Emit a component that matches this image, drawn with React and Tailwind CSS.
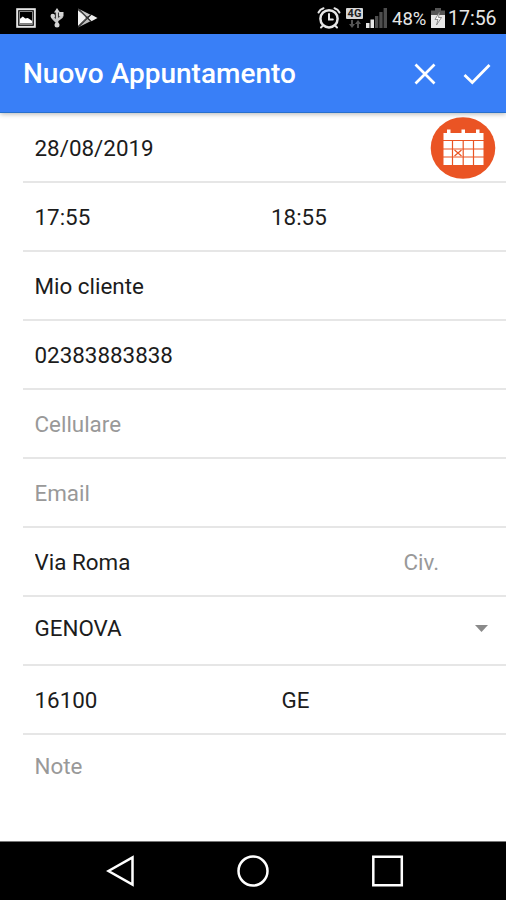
import { useState } from "react";

const StatusBar = () => {
  return (
    <div className="flex h-[34px] items-center justify-between bg-black pt-px pl-4 pr-[9px] text-[#e6e6e6]">
      <div className="flex items-center">
        <svg width="20" height="20" viewBox="0 0 20 20" fill="none">
          <rect x="1.2" y="1.2" width="17.6" height="17.6" stroke="#e6e6e6" strokeWidth="2" />
          <path d="M3.800 15.500v-4.500l3-2.500 2.500 2 2.500-.5 4.500 3v2.500z" fill="#fff" />
          <path d="M3.500 3.500h13v13h-13z" stroke="#888" strokeWidth="1" />
        </svg>
        <svg className="ml-[14px]" width="14" height="20" viewBox="0 0 14 20" fill="none" stroke="#c8c8c8" strokeWidth="2.600">
          <path d="M7 3v15M2.800 8v2l4 4M11.500 6v3L7 12.500" />
          <path d="M7 0l3 4.500H4z" fill="#d4d4d4" stroke="none" />
          <circle cx="7" cy="17" r="2.500" fill="#d4d4d4" stroke="none" />
          <circle cx="2.800" cy="8" r="2.300" fill="#d4d4d4" stroke="none" />
          <path d="M9 4h4.500v4.500H9z" fill="#d4d4d4" stroke="none" />
        </svg>
        <svg className="ml-[14px]" width="20" height="20" viewBox="0 0 20 20">
          <path d="M0 0.500L13 7l-7 3.300z" fill="#c8c8c8" />
          <path d="M0 2l8 8-8 8z" fill="#f2f2f2" />
          <path d="M0 19.500L13 13l-5-3z" fill="#bdbdbd" />
          <path d="M13.500 6.800l6 3.200-6 3.200-3.500-3.200z" fill="#eee" />
          <path d="M1 1.500l12 12M1 18.500l12-12" stroke="#333" strokeWidth="1.100" />
        </svg>
      </div>
      <div className="flex items-center">
        <svg width="24" height="22" viewBox="0 0 24 22" fill="none" stroke="#e6e6e6" strokeLinecap="round">
          <circle cx="12" cy="11.800" r="8.600" strokeWidth="2.500" />
          <path d="M12 7v5.500h3.800" strokeWidth="2" />
          <path d="M1.500 5.500Q3 2.300 6.500 1.300M22.500 5.500Q21 2.300 17.500 1.300M6 18.500l-2 2M18 18.500l2 2" strokeWidth="2" />
        </svg>
        <div className="ml-[5px] flex h-5 w-[17px] flex-col items-center">
          <span className="flex h-[11px] w-[17px] items-center justify-center rounded-[1px] bg-[#d8d8d8] text-[11px] leading-none font-bold text-[#222]">4G</span>
          <svg className="mt-px" width="14" height="8" viewBox="0 0 14 8" fill="#555">
            <path d="M3 0h2v4h2L4 8 1 4h2zM9 8h2V4h2l-3-4-3 4h2z" />
          </svg>
        </div>
        <svg className="ml-[3px]" width="21" height="20" viewBox="0 0 21 20">
          <path d="M0 15h3.500v5H0zM4.500 11.500H8V20H4.500z" fill="#e6e6e6" />
          <path d="M9 8h3.300v12H9zM13.300 4h3.300v16h-3.300zM17.600 0H21v20h-3.400z" fill="#4d4d4d" />
        </svg>
        <span className="ml-[5px] w-[35px] pt-[2px] text-[18.5px] leading-5">48%</span>
        <svg className="ml-1" width="14" height="20" viewBox="0 0 14 20">
          <path d="M4 0h6v2.500h4V7H0V2.500h4z" fill="#555" />
          <path d="M0 7h14v13H0z" fill="#e8e8e8" />
          <path d="M8.500 4L4 11.500h3L5.500 17l5-7.500H7.500z" fill="#fff" stroke="#777" strokeWidth="0.800" />
        </svg>
        <span className="ml-[3px] w-[49px] pt-[2px] text-[19.5px] leading-5">17:56</span>
      </div>
    </div>
  );
};

const Header = () => {
  return (
    <header className="relative flex h-[79px] items-center justify-between border-b border-[#2870cc] bg-[#397ff7] pt-[2px] pl-[23px] pr-[15px] text-white shadow-[0_1px_5px_rgba(0,0,0,0.3)]">
      <h1 className="text-[28px] leading-8 font-medium">Nuovo Appuntamento</h1>
      <div className="flex items-center gap-[27px]">
        <button aria-label="Annulla">
          <svg width="22" height="22" viewBox="0 0 22 22" fill="none" stroke="#fff" strokeWidth="2.700">
            <path d="M1.500 1.500l19 19M20.500 1.500l-19 19" />
          </svg>
        </button>
        <button aria-label="Conferma">
          <svg width="28" height="22" viewBox="0 0 28 22" fill="none" stroke="#fff" strokeWidth="2.800">
            <path d="M1.500 12l7.800 7.500L26.500 2" />
          </svg>
        </button>
      </div>
    </header>
  );
};

const CalendarIcon = () => {
  return (
    <svg width="66" height="62" viewBox="0 0 66 62" fill="none">
      <ellipse cx="33" cy="31" rx="32.300" ry="30.800" fill="#ea5424" />
      <path d="M13.500 16h40v7h-40zM13.500 24h40v24h-40z" fill="#fff" />
      <path d="M17 12.500h3.500v4H17zM31.500 12.500H35v4h-3.500zM46 12.500h3.500v4H46z" fill="#fff" />
      <path d="M22.500 23.500v25M33.200 23.500v25M43.500 23.500v25M13 32h41M13 40h41" stroke="#ea5424" strokeWidth="1.200" />
      <path d="M24.500 33l7 6M31.500 33l-7 6" stroke="#ea5424" strokeWidth="1.200" />
    </svg>
  );
};

const Row = ({ children, className = "h-[69px] pt-[2px]" }) => {
  return (
    <div className={`ml-[23px] flex items-center border-b-2 border-[#e6e6e6] pl-[11.5px] ${className}`}>
      {children}
    </div>
  );
};

const Field = ({ value, placeholder, onChange, className = "flex-1" }) => {
  return (
    <input
      type="text"
      value={value}
      placeholder={placeholder}
      onChange={onChange}
      className={`h-8 min-w-0 bg-transparent p-0 outline-none placeholder:text-[#999] ${className}`}
    />
  );
};

export default function App() {
  const [form, setForm] = useState({
    date: "28/08/2019",
    start: "17:55",
    end: "18:55",
    client: "Mio cliente",
    phone: "02383883838",
    mobile: "",
    email: "",
    street: "Via Roma",
    number: "",
    city: "GENOVA",
    zip: "16100",
    province: "GE",
    notes: "",
  });

  const update = (name) => (e) => setForm({ ...form, [name]: e.target.value });

  return (
    <div className="flex h-[900px] w-[506px] flex-col overflow-hidden bg-white font-['Roboto',sans-serif] text-[22.4px] text-[#1c1c1c]">
      <StatusBar />
      <Header />
      <main className="flex-1">
        <Row className="h-[70px] pt-[2px] pr-[10px]">
          <Field value={form.date} onChange={update("date")} className="h-8 flex-1 pt-[2px]" />
          <button aria-label="Calendario">
            <CalendarIcon />
          </button>
        </Row>
        <Row>
          <Field value={form.start} onChange={update("start")} className="w-[236.5px]" />
          <Field value={form.end} onChange={update("end")} />
        </Row>
        <Row>
          <Field value={form.client} onChange={update("client")} />
        </Row>
        <Row>
          <Field value={form.phone} onChange={update("phone")} />
        </Row>
        <Row>
          <Field value={form.mobile} placeholder="Cellulare" onChange={update("mobile")} />
        </Row>
        <Row>
          <Field value={form.email} placeholder="Email" onChange={update("email")} />
        </Row>
        <Row>
          <Field value={form.street} onChange={update("street")} className="w-[369px]" />
          <Field value={form.number} placeholder="Civ." onChange={update("number")} />
        </Row>
        <Row className="h-[69px] pr-[18px] pb-[4px]">
          <Field value={form.city} onChange={update("city")} />
          <svg width="13" height="7" viewBox="0 0 13 7" fill="#8a8a8a">
            <path d="M0 0h13L6.500 7z" />
          </svg>
        </Row>
        <Row>
          <Field value={form.zip} onChange={update("zip")} className="w-[247px]" />
          <Field value={form.province} onChange={update("province")} />
        </Row>
        <div className="flex pt-4 pl-[34.5px]">
          <Field value={form.notes} placeholder="Note" onChange={update("notes")} />
        </div>
      </main>
      <nav className="flex h-[59px] items-center justify-between border-t border-[#777] bg-black pl-[106px] pr-[102px]">
        <svg width="29" height="34" viewBox="0 0 29 34" fill="none" stroke="#fff" strokeWidth="2.500">
          <path d="M26.500 3.500v27L2.500 17z" />
        </svg>
        <svg width="34" height="34" viewBox="0 0 34 34" fill="none" stroke="#fff" strokeWidth="2.500">
          <circle cx="17" cy="17" r="14.500" />
        </svg>
        <svg width="33" height="34" viewBox="0 0 33 34" fill="none" stroke="#fff" strokeWidth="2.500">
          <path d="M2.300 2.800h28.500v28.500H2.300z" />
        </svg>
      </nav>
    </div>
  );
}
